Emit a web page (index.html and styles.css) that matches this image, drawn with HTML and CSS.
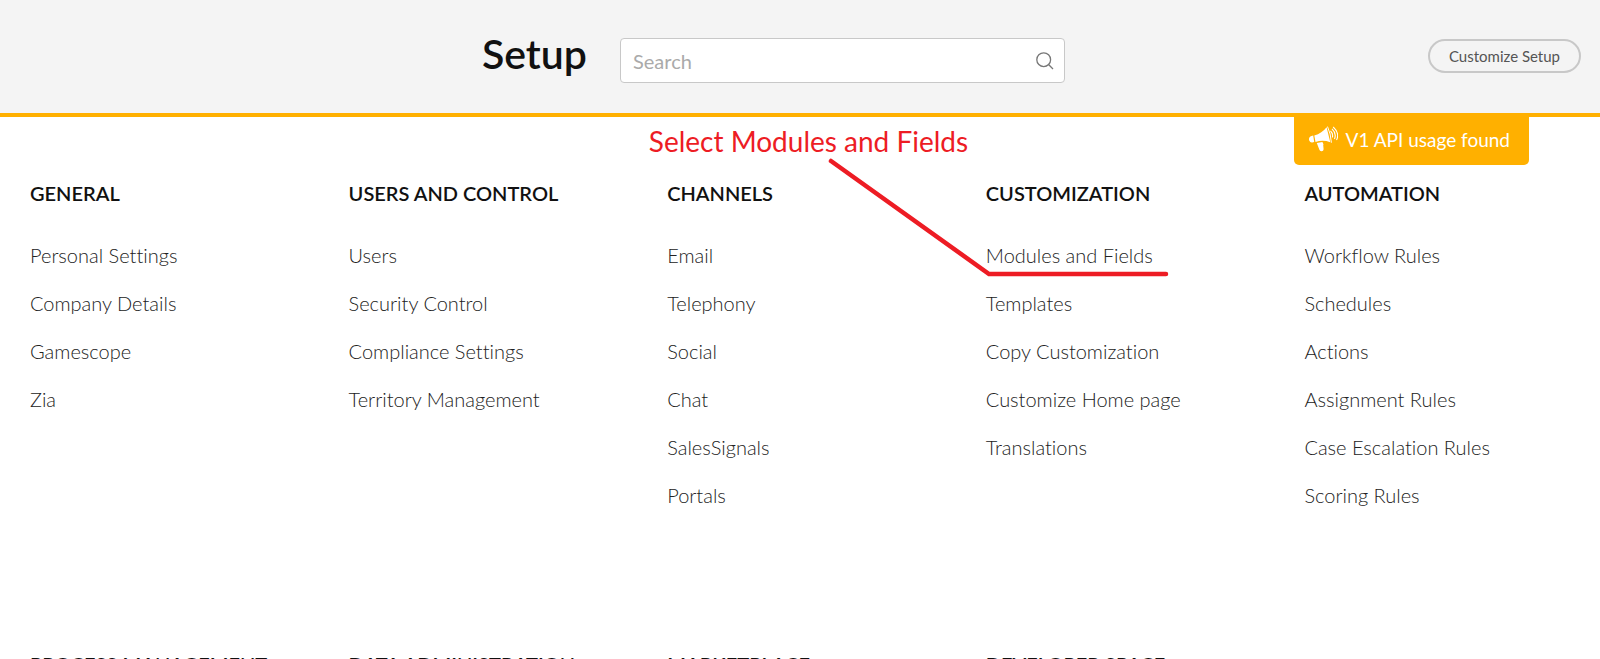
FILE: index.html
```html
<!DOCTYPE html>
<html lang="en">
<head>
<meta charset="utf-8">
<title>Setup</title>
<link rel="stylesheet" href="styles.css">
</head>
<body>
<header class="topbar">
  <h1 class="title">Setup</h1>
  <form class="search" role="search">
    <input class="search-input" type="search" placeholder="Search" aria-label="Search">
    <button class="search-button" type="button" aria-label="Search">
      <svg width="18" height="18" viewBox="0 0 18 18" fill="none" stroke="#777" stroke-width="1.3"><circle cx="7.7" cy="7.7" r="6.9"/><path d="M12.3 12.3L17 17"/></svg>
    </button>
  </form>
  <button class="customize" type="button">Customize Setup</button>
  <a class="notice" href="#">
    <svg width="30" height="26" viewBox="0 0 30 26" fill="#fff">
      <path d="M5.2 9.6L4.3 9.8A3.4 3.4 0 0 0 1.2 14.4 3.1 3.1 0 0 0 5 16.3L6.2 15.9Z"/>
      <path d="M6.3 9.5C11.5 8 15.5 5.3 18.6 1.2L22.3 16.3C17.5 14.5 12.5 14.4 7.5 16Z"/>
      <path d="M8.8 16.9L14.4 16 15.5 18.2 15.2 19 15.6 23.2Q15.5 25 13.6 25.2 11.8 25.3 11.3 23.6Z"/>
      <path d="M19.5.6Q22.8 7.5 23.4 16.7" fill="none" stroke="#fff" stroke-width="1"/>
      <path d="M22.5 5Q25.3 7.5 24.4 11.5M24 2.8Q28.8 7.3 26.5 13M25.2 1Q32 7.5 28.5 14" fill="none" stroke="#fff" stroke-width="1.1"/>
    </svg>
    <span>V1 API usage found</span>
  </a>
</header>
<main class="groups">
  <section class="group">
    <h2>GENERAL</h2>
    <ul>
      <li><a href="#">Personal Settings</a></li>
      <li><a href="#">Company Details</a></li>
      <li><a href="#">Gamescope</a></li>
      <li><a href="#">Zia</a></li>
    </ul>
  </section>
  <section class="group">
    <h2>USERS AND CONTROL</h2>
    <ul>
      <li><a href="#">Users</a></li>
      <li><a href="#">Security Control</a></li>
      <li><a href="#">Compliance Settings</a></li>
      <li><a href="#">Territory Management</a></li>
    </ul>
  </section>
  <section class="group">
    <h2>CHANNELS</h2>
    <ul>
      <li><a href="#">Email</a></li>
      <li><a href="#">Telephony</a></li>
      <li><a href="#">Social</a></li>
      <li><a href="#">Chat</a></li>
      <li><a href="#">SalesSignals</a></li>
      <li><a href="#">Portals</a></li>
    </ul>
  </section>
  <section class="group">
    <h2>CUSTOMIZATION</h2>
    <ul>
      <li><a href="#">Modules and Fields</a></li>
      <li><a href="#">Templates</a></li>
      <li><a href="#">Copy Customization</a></li>
      <li><a href="#">Customize Home page</a></li>
      <li><a href="#">Translations</a></li>
    </ul>
    <div class="callout">
      <p>Select Modules and Fields</p>
      <svg width="342" height="120" viewBox="0 0 342 120" fill="none" stroke="#ed1c24" stroke-width="4.5" stroke-linecap="round"><path d="M4 4L162 117H339"/></svg>
    </div>
  </section>
  <section class="group">
    <h2>AUTOMATION</h2>
    <ul>
      <li><a href="#">Workflow Rules</a></li>
      <li><a href="#">Schedules</a></li>
      <li><a href="#">Actions</a></li>
      <li><a href="#">Assignment Rules</a></li>
      <li><a href="#">Case Escalation Rules</a></li>
      <li><a href="#">Scoring Rules</a></li>
    </ul>
  </section>
  <section class="group"><h2>PROCESS MANAGEMENT</h2></section>
  <section class="group"><h2>DATA ADMINISTRATION</h2></section>
  <section class="group"><h2>MARKETPLACE</h2></section>
  <section class="group"><h2>DEVELOPER SPACE</h2></section>
</main>
</body>
</html>
```
FILE: styles.css
```css
* { box-sizing: border-box; }
body {
  margin: 0;
  height: 100vh;
  overflow: hidden;
  background: #fff;
  color: #111;
  font-family: Lato, "Liberation Sans", sans-serif;
  font-variant-ligatures: none;
}
h1, h2, p, ul { margin: 0; padding: 0; }
button { font-family: inherit; cursor: pointer; }
a { color: inherit; text-decoration: none; }

.topbar {
  position: relative;
  display: flex;
  align-items: flex-start;
  padding: 38px 19px 30px 30%;
  background: #f4f4f4;
  border-bottom: 4px solid #ffb000;
}
.title {
  width: 140px;
  padding-left: 2px;
  font-size: 41px;
  line-height: 32px;
  font-weight: 600;
}
.search {
  display: flex;
  align-items: center;
  flex: 0 1 445px;
  height: 45px;
  padding: 0 10px 0 12px;
  background: #fff;
  border: 1px solid #c8c8c8;
  border-radius: 4px;
}
.search-input {
  flex: 1;
  min-width: 0;
  padding: 0;
  border: 0;
  outline: 0;
  background: none;
  font-family: inherit;
  font-size: 20px;
}
.search-input::placeholder { color: #aaa; }
.search-button {
  display: flex;
  padding: 0;
  border: 0;
  background: none;
}
.customize {
  height: 34px;
  margin-top: 1px;
  margin-left: auto;
  padding: 0 19px;
  border: 2px solid #c8c8c8;
  border-radius: 17px;
  background: none;
  color: #555;
  font-size: 15px;
}
.notice {
  position: absolute;
  top: 100%;
  right: 71px;
  display: flex;
  align-items: center;
  gap: 8px;
  height: 52px;
  padding: 0 19px 0 14px;
  border-radius: 0 0 5px 5px;
  background: #ffb000;
  color: #fff;
  font-size: 19px;
}

.groups {
  display: grid;
  grid-template-columns: repeat(5, 1fr);
  grid-template-rows: 471px auto;
  margin-right: 7px;
  padding-top: 64px;
}
.group {
  position: relative;
  padding-left: 30px;
}
.group h2 {
  margin-bottom: 26px;
  font-size: 20px;
  line-height: 24px;
  font-weight: 600;
}
.group ul { list-style: none; }
.group li {
  color: #222;
  font-size: 20px;
  line-height: 48px;
  font-weight: 300;
}
.callout {
  position: absolute;
  top: -60px;
  left: -307px;
  color: #ed1c24;
  pointer-events: none;
}
.callout p {
  font-size: 28px;
  line-height: 40px;
  white-space: nowrap;
}
.callout svg {
  display: block;
  margin-top: -4px;
  margin-left: 178px;
}
```
